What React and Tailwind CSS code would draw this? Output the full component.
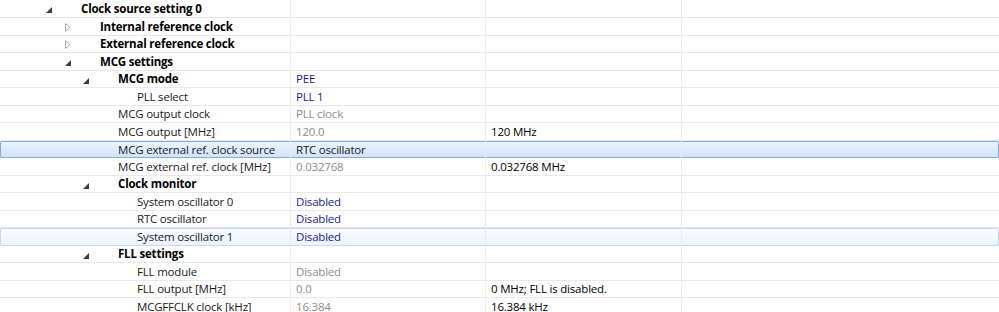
const rows = [
  { label: "Clock source setting 0", level: 0, icon: "open", bold: true },
  { label: "Internal reference clock", level: 1, icon: "closed", bold: true },
  { label: "External reference clock", level: 1, icon: "closed", bold: true },
  { label: "MCG settings", level: 1, icon: "open", bold: true },
  { label: "MCG mode", level: 2, icon: "open", bold: true, value: "PEE", tone: "blue" },
  { label: "PLL select", level: 3, value: "PLL 1", tone: "blue" },
  { label: "MCG output clock", level: 2, value: "PLL clock", tone: "gray" },
  { label: "MCG output [MHz]", level: 2, value: "120.0", tone: "gray", info: "120 MHz" },
  { label: "MCG external ref. clock source", level: 2, value: "RTC oscillator", tone: "black", state: "selected" },
  { label: "MCG external ref. clock [MHz]", level: 2, value: "0.032768", tone: "gray", info: "0.032768 MHz" },
  { label: "Clock monitor", level: 2, icon: "open", bold: true },
  { label: "System oscillator 0", level: 3, value: "Disabled", tone: "blue" },
  { label: "RTC oscillator", level: 3, value: "Disabled", tone: "blue" },
  { label: "System oscillator 1", level: 3, value: "Disabled", tone: "blue", state: "hover" },
  { label: "FLL settings", level: 2, icon: "open", bold: true },
  { label: "FLL module", level: 3, value: "Disabled", tone: "gray" },
  { label: "FLL output [MHz]", level: 3, value: "0.0", tone: "gray", info: "0 MHz; FLL is disabled." },
  { label: "MCGFFCLK clock [kHz]", level: 3, value: "16.384", tone: "gray", info: "16.384 kHz" },
];

const indent = ["pl-[46px]", "pl-[65px]", "pl-[83px]", "pl-[102px]"];

const tones = {
  blue: "text-[#1b1b8f]",
  gray: "text-[#8c8c8c]",
  black: "text-[#1a1a1a]",
};

function Expander({ kind }) {
  if (kind === "open") {
    return (
      <svg width="6" height="6" viewBox="0 0 6 6" className="mt-[3px]">
        <polygon points="6,0 6,6 0,6" fill="#3c3c3c" />
      </svg>
    );
  }
  if (kind === "closed") {
    return (
      <svg width="6" height="9" viewBox="0 0 6 9" className="mt-[1px]">
        <polygon points="0.5,0.5 5,4.5 0.5,8.5" fill="none" stroke="#a8a8a8" strokeWidth="1" />
      </svg>
    );
  }
  return null;
}

export default function App() {
  return (
    <div
      className="w-[999px] h-[312px] overflow-hidden bg-white text-[11.5px] tracking-[-0.2px] text-[#1a1a1a]"
      style={{ fontFamily: '"Open Sans", "Noto Sans", sans-serif' }}
    >
      {rows.map((row, i) => {
        const tall = i === 0 || i % 2 === 1;
        let rowCls = "border-b border-[#e8e8e8]";
        if (row.state === "selected") {
          rowCls =
            "rounded-[2px] shadow-[inset_0_0_0_1px_#84acdd] bg-gradient-to-b from-[#ecf4fe] to-[#cfe3fa]";
        } else if (row.state === "hover") {
          rowCls =
            "rounded-[2px] shadow-[inset_0_0_0_1px_#c3d8f2] bg-gradient-to-b from-[#fafcff] to-[#ebf3fd]";
        }
        return (
          <div
            key={i}
            className={`flex items-stretch ${tall ? "h-[18px]" : "h-[17px]"} ${rowCls}`}
          >
            <div
              className={`w-[291px] shrink-0 flex items-center border-r border-[#ececec] ${indent[row.level]}`}
            >
              <span className="w-[35px] shrink-0 flex items-center">
                <Expander kind={row.icon} />
              </span>
              <span className={`whitespace-nowrap leading-none ${row.bold ? "font-bold text-black" : ""}`}>
                {row.label}
              </span>
            </div>
            <div className="w-[195px] shrink-0 flex items-center pl-[5px] border-r border-[#ececec]">
              {row.value && (
                <span className={`whitespace-nowrap leading-none ${tones[row.tone]}`}>{row.value}</span>
              )}
            </div>
            <div className="w-[196px] shrink-0 flex items-center pl-[5px] border-r border-[#ececec]">
              {row.info && <span className="whitespace-nowrap leading-none text-black">{row.info}</span>}
            </div>
            <div className="flex-1" />
          </div>
        );
      })}
    </div>
  );
}
